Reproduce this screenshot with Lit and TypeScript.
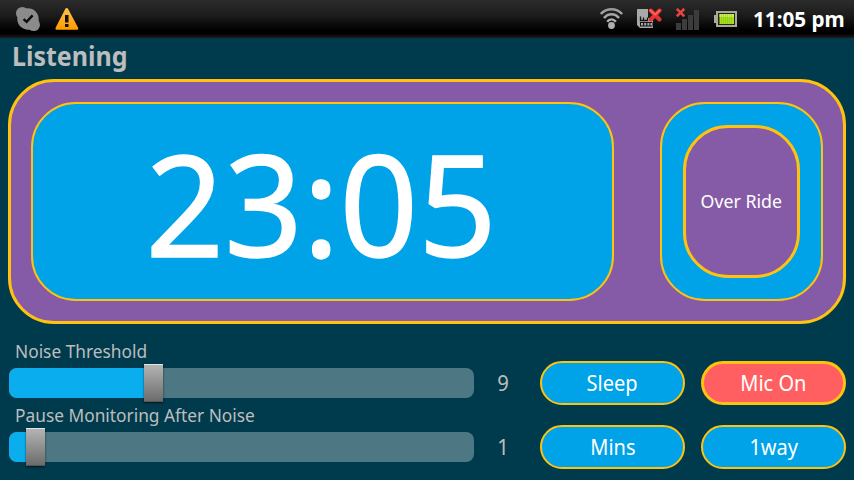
import { LitElement, html, css } from "lit";
import { customElement, property } from "lit/decorators.js";

@customElement("status-bar")
class StatusBar extends LitElement {
  static styles = css`
    :host {
      display: flex;
      align-items: center;
      height: 38px;
      box-sizing: border-box;
      padding: 0 9px 0 15px;
      background: linear-gradient(#2c2c2c 0, #1c1c1c 40%, #000 80%, #000 88%, #1c1c1c 100%);
      color: #fff;
    }
    svg { display: block; flex: none; }
    .skype { margin-right: 14px; }
    .grow { flex: 1; }
    .wifi { margin-right: 13px; }
    .sim { margin-right: 14px; }
    .signal { margin-right: 14px; }
    .battery { margin-right: 16px; }
    .time {
      font: bold 21px/40px "Noto Sans", "Open Sans", sans-serif;
      white-space: nowrap;
      width: 92px;
    }
    .time span { display: inline-block; transform: scaleX(.985); transform-origin: 0 50%; }
  `;

  render() {
    return html`
      <svg class="skype" width="26" height="26" viewBox="0 0 26 26">
        <circle cx="13" cy="13" r="10.7" fill="#8b8b8b" />
        <circle cx="7.3" cy="7.3" r="6.3" fill="#8b8b8b" />
        <circle cx="18.7" cy="18.7" r="6.3" fill="#8b8b8b" />
        <path d="M8.6 13.2l3 2.7 6-6.5" fill="none" stroke="#0c0c0c" stroke-width="2.4" />
      </svg>
      <svg width="24" height="24" viewBox="0 0 24 24">
        <defs>
          <linearGradient id="warn" x2="0" y2="1">
            <stop offset="0" stop-color="#ffc04a" /><stop offset="1" stop-color="#ff9c00" />
          </linearGradient>
        </defs>
        <path d="M11.7 1q1 0 1.6 1.2l9.8 18.5q.7 2-.8 2H1.4q-1.4 0-.8-2l9.5-18.5q.6-1.2 1.6-1.2z" fill="url(#warn)" />
        <path d="M10 8h3.5v7.5H10zM10 17h3.5v3H10z" fill="#111" />
      </svg>
      <div class="grow"></div>
      <svg class="wifi" width="24" height="24" viewBox="0 0 24 24">
        <defs>
          <linearGradient id="wf" gradientUnits="userSpaceOnUse" x1="0" y1="1" x2="0" y2="22">
            <stop offset="0" stop-color="#999" /><stop offset="1" stop-color="#c4c4c4" />
          </linearGradient>
        </defs>
        <g fill="none" stroke="url(#wf)" stroke-width="2.4">
          <path d="M.8 7Q5.2 2.2 11.5 2.2t10.7 4.8" />
          <path d="M4 11Q7 7.2 11.5 7.2t7.5 3.8" />
          <path d="M7.2 14.7Q9 12.4 11.5 12.4t4.3 2.3" />
        </g>
        <circle cx="11.5" cy="18.5" r="3.4" fill="#b0b0b0" />
      </svg>
      <svg class="sim" width="25" height="22" viewBox="0 0 25 22">
        <path d="M0 1.5q0-.5.5-.5H11v9h5v10H3l-3-3z" fill="#a8a8a8" />
        <path d="M3.5 8.5v4h3v-3M10.5 9.5v3h-4" fill="none" stroke="#151515" stroke-width="1.3" />
        <path d="M3 14h12.5v4.5H3z" fill="#151515" />
        <path d="M4 15h2v2.5H4zM7.2 15h2v2.5h-2zM10.4 15h2v2.5h-2zM13.4 15h1.6v2.5h-1.6z" fill="#a8a8a8" />
        <path d="M13.8 2.5l8.7 9M22.5 2.5l-8.7 9" stroke="#e83232" stroke-width="4" stroke-linecap="round" />
        <path d="M13.3 2.3l4.8 4.5 4.7-4.5" fill="none" stroke="#ff7068" stroke-width="1.4" stroke-linecap="round" />
      </svg>
      <svg class="signal" width="24" height="22" viewBox="0 0 24 22">
        <path d="M0 15h5v7H0zM6 11h5v11H6zM12 7h5v15h-5zM18 2h5v20h-5z" fill="#3c3c3c" />
        <path d="M.8.8l7.5 7.5M8.3.8L.8 8.3" stroke="#e8453f" stroke-width="2.6" />
      </svg>
      <svg class="battery" width="23" height="16" viewBox="0 0 23 16">
        <path d="M2 0h21v16H2v-4H0V4h2z" fill="#a9a9a0" />
        <path d="M4 2h17v12H4z" fill="#222a10" />
        <path d="M5.5 3H20v10H5.5z" fill="#a5e01a" />
        <path d="M5.5 3H20v3H5.5z" fill="#c9ef62" />
        <path d="M7.5 3v10M9.5 3v10M11.5 3v10M13.5 3v10M15.5 3v10M17.5 3v10" stroke="#7fb310" stroke-width=".4" />
      </svg>
      <div class="time"><span>11:05 pm</span></div>
    `;
  }
}

@customElement("level-slider")
class LevelSlider extends LitElement {
  @property() label = "";
  @property() value = "";
  @property({ type: Number }) fill = 0;

  static styles = css`
    :host { display: grid; grid-template-columns: 465px 58px; height: 64px; grid-template-rows: 27px 30px; }
    .label { grid-column: 1 / 3; padding-left: 6px; font-size: 18px; line-height: 20px; }
    .label span { display: inline-block; transform: scaleX(.962); transform-origin: 0 50%; }
    .track { display: flex; align-items: center; border-radius: 8px; background: #4d7782; }
    .fill { height: 30px; border-radius: 8px 0 0 8px; background: #0aaeee; }
    .thumb {
      flex: none; width: 19px; height: 38px; box-sizing: border-box;
      background: linear-gradient(#b4b4b4, #6c6c6c);
      border-top: 1px solid #e4e4e4; border-bottom: 1px solid #555;
      box-shadow: 0 1px 2px rgba(0, 0, 0, .6);
    }
    .value { text-align: center; font-size: 22px; line-height: 29px; transform: scaleX(.92); }
  `;

  render() {
    return html`
      <div class="label"><span>${this.label}</span></div>
      <div class="track">
        <div class="fill" style="width:${this.fill}px"></div>
        <div class="thumb"></div>
      </div>
      <div class="value">${this.value}</div>
    `;
  }
}

@customElement("app-root")
class AppRoot extends LitElement {
  static styles = css`
    :host {
      display: block; width: 854px; height: 480px; overflow: hidden;
      background: #003b4d; color: #bdbdbd;
      font-family: "Noto Sans", "Open Sans", sans-serif;
      white-space: nowrap;
    }
    span { display: inline-block; }
    .title { height: 41px; padding-left: 12px; font-size: 27px; font-weight: bold; line-height: 36px; }
    .title span { transform: scaleX(.925); transform-origin: 0 50%; }
    .panel {
      display: flex; justify-content: space-between; box-sizing: border-box;
      height: 245px; margin: 0 8px; padding: 20px;
      border: 3px solid #ffc20e; border-radius: 46px; background: #855ba7;
    }
    .clock {
      box-sizing: border-box; width: 583px; border: 2px solid #ffc20e; border-radius: 45px;
      background: #00a2e8; color: #fff; text-align: center; font-size: 141px; line-height: 197px;
      padding-right: 2px;
    }
    .clock span { transform: scaleX(.975); -webkit-text-stroke: 1.4px #fff; }
    .side {
      display: flex; box-sizing: border-box; width: 163px; padding: 21px;
      border: 2px solid #ffc20e; border-radius: 45px; background: #00a2e8;
    }
    .override {
      flex: 1; display: flex; align-items: center; justify-content: center;
      border: 3px solid #ffc20e; border-radius: 45px; background: #855ba7;
      color: #fff; font-size: 18px;
    }
    .override span { transform: scaleX(.985); padding-bottom: 2px; }
    .controls { display: flex; margin: 17px 8px 0 9px; }
    .buttons { display: grid; grid-template-columns: 145px 145px; grid-auto-rows: 44px; gap: 20px 16px; padding: 20px 0 0 8px; }
    .button {
      display: flex; align-items: center; justify-content: center;
      border: 2px solid #ffc20e; border-radius: 22px; background: #00a2e8;
      color: #fff; font-size: 22px;
    }
    .button span { transform: scaleX(.91); padding-bottom: 2px; }
    .alert { border-width: 3px; background: #ff5f60; }
  `;

  render() {
    return html`
      <status-bar></status-bar>
      <div class="title"><span>Listening</span></div>
      <div class="panel">
        <div class="clock"><span>23:05</span></div>
        <div class="side"><div class="override"><span>Over Ride</span></div></div>
      </div>
      <div class="controls">
        <div>
          <level-slider label="Noise Threshold" value="9" .fill=${135}></level-slider>
          <level-slider label="Pause Monitoring After Noise" value="1" .fill=${17}></level-slider>
        </div>
        <div class="buttons">
          <div class="button"><span>Sleep</span></div>
          <div class="button alert"><span>Mic On</span></div>
          <div class="button"><span>Mins</span></div>
          <div class="button"><span>1way</span></div>
        </div>
      </div>
    `;
  }
}
